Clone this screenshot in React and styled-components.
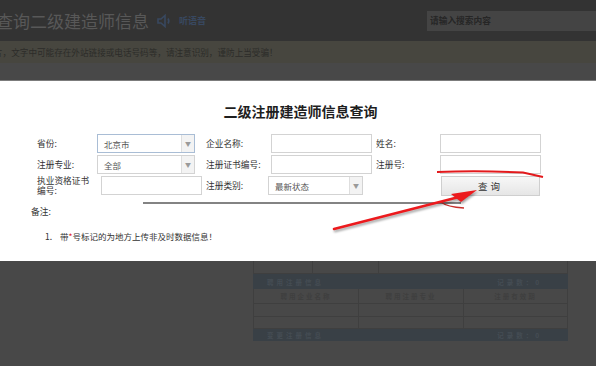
import React from 'react'
import styled, { createGlobalStyle } from 'styled-components'

const GlobalStyle = createGlobalStyle`
  html, body {
    margin: 0;
    padding: 0;
    background: #484848;
    font-family: "Noto Sans CJK SC", "Noto Sans", sans-serif;
  }
`

const Page = styled.div`
  position: relative;
  width: 596px;
  height: 366px;
  overflow: hidden;
  background: #484848;
`

const Header = styled.div`
  height: 41px;
  background: #333333;
  display: flex;
  align-items: center;
`

const SiteTitle = styled.div`
  margin-left: -4px;
  font-size: 17px;
  color: #585858;
  line-height: 1;
`

const Listen = styled.div`
  display: flex;
  align-items: center;
  gap: 7px;
  margin-left: 8px;
  color: #384860;
  font-size: 9px;
  font-weight: bold;
`

const Search = styled.div`
  margin-left: auto;
  width: 166px;
  height: 20px;
  background: #444444;
  display: flex;
  align-items: center;
  padding-left: 3px;
  font-size: 8.7px;
  font-weight: bold;
  color: #262626;
`

const Notice = styled.div`
  height: 22px;
  background: #47463f;
  display: flex;
  align-items: center;
  margin-left: -6px;
  font-size: 8.6px;
  color: #2c2c29;
  white-space: nowrap;
`

const Gap = styled.div`
  height: 17px;
  border-bottom: 1px solid #7c7c7c;
`

const Modal = styled.div`
  height: 180px;
  background: #ffffff;
  padding-top: 20px;
  box-sizing: border-box;
`

const ModalTitle = styled.h2`
  margin: 0;
  text-align: center;
  font-size: 14px;
  line-height: 20px;
  font-weight: bold;
  color: #1e1e1e;
  padding-left: 5px;
`

const Form = styled.div`
  margin-top: 13px;
  padding-left: 37px;
  display: grid;
  grid-template-columns: 60px 109px 62px 108px 64px 102px;
  grid-auto-rows: 19px;
  row-gap: 2px;
  align-items: center;
`

const Label = styled.div`
  font-size: 8.7px;
  line-height: ${p => (p.$tight ? 9.5 : 10)}px;
  color: #333;
`

const Field = styled.div`
  box-sizing: border-box;
  margin-left: ${p => p.$offset || 0}px;
  width: ${p => p.$w}px;
  height: 19px;
  border: 1px solid ${p => (p.$focus ? '#a9bdd5' : '#d3d3d3')};
  background: #fff;
  display: flex;
  align-items: center;
`

const FieldText = styled.span`
  flex: 1;
  padding-left: 6px;
  font-size: 8.5px;
  color: #555;
`

const Arrow = styled.span`
  width: 12px;
  align-self: stretch;
  background: #f3f3f3;
  border-left: 1px solid #dedede;
  display: flex;
  align-items: center;
  justify-content: center;
  font-size: 6px;
  color: #9a9a9a;
`

const Button = styled.div`
  box-sizing: border-box;
  margin-left: 1px;
  width: 99px;
  height: 20px;
  border: 1px solid #cfcfcf;
  background: linear-gradient(#f7f7f7, #e6e6e6);
  display: flex;
  align-items: center;
  justify-content: center;
  font-size: 9.5px;
  letter-spacing: 3px;
  color: #333;
`

const Remark = styled.div`
  margin-top: 10px;
  padding-left: 31px;
  font-size: 8.7px;
  line-height: 14px;
  color: #333;
`

const Item = styled.div`
  margin-top: 10px;
  padding-left: 45px;
  display: flex;
  font-size: 8.5px;
  line-height: 14px;
  color: #333;
`

const Num = styled.span`
  width: 15px;
`

const Star = styled.span`
  color: #e02020;
`

const Below = styled.div`
  padding-left: 253px;
`

const Table = styled.div`
  width: 315px;
`

const Row = styled.div`
  display: grid;
  grid-template-columns: ${p => p.$cols};
  height: ${p => p.$h}px;
  border-bottom: 1px solid #3f3f3f;
`

const Cell = styled.div`
  border-left: 1px solid #3f3f3f;
  &:last-child {
    border-right: 1px solid #3f3f3f;
  }
  display: flex;
  align-items: center;
  justify-content: center;
  font-size: 6.5px;
  letter-spacing: 2px;
  color: #3f3f3f;
  font-weight: bold;
`

const HeadBar = styled.div`
  height: ${p => p.$h}px;
  background: #394046;
  display: flex;
  align-items: center;
  justify-content: space-between;
  padding: 0 26px 0 14px;
  font-size: 6.5px;
  letter-spacing: 3px;
  font-weight: bold;
  color: #454d54;
`

const Overlay = styled.svg`
  position: absolute;
  left: 0;
  top: 0;
  pointer-events: none;
`

function Select({ w, text, focus }) {
  return (
    <Field $w={w} $focus={focus}>
      <FieldText>{text}</FieldText>
      <Arrow>▼</Arrow>
    </Field>
  )
}

export default function App() {
  return (
    <Page>
      <GlobalStyle />
      <Header>
        <SiteTitle>查询二级建造师信息</SiteTitle>
        <Listen>
          <svg width="15" height="14" viewBox="0 0 15 14" fill="none" stroke="#384860" strokeWidth="1.6">
            <path d="M1 5 H4 L8 1.5 V12.5 L4 9 H1 Z" />
            <path d="M11 4.5 Q12.6 7 11 9.5" />
          </svg>
          <span>听语音</span>
        </Listen>
        <Search>请输入搜索内容</Search>
      </Header>
      <Notice>片，文字中可能存在外站链接或电话号码等，请注意识别，谨防上当受骗！</Notice>
      <Gap />
      <Modal>
        <ModalTitle>二级注册建造师信息查询</ModalTitle>
        <Form>
          <Label>省份:</Label>
          <Select w={98} text="北京市" focus />
          <Label>企业名称:</Label>
          <Field $w={101} $offset={3} />
          <Label>姓名:</Label>
          <Field $w={101} />

          <Label>注册专业:</Label>
          <Select w={98} text="全部" />
          <Label>注册证书编号:</Label>
          <Field $w={101} $offset={3} />
          <Label>注册号:</Label>
          <Field $w={101} />

          <Label $tight>执业资格证书<br />编号:</Label>
          <Field $w={101} $offset={4} />
          <Label>注册类别:</Label>
          <Select w={95} text="最新状态" />
          <span />
          <Button>查询</Button>
        </Form>
        <Remark>备注:</Remark>
        <Item>
          <Num>1.</Num>
          <span>带<Star>*</Star>号标记的为地方上传非及时数据信息！</span>
        </Item>
      </Modal>
      <Below>
        <Table>
          <Row $cols="59px 66px 1fr" $h={12}>
            <Cell /><Cell /><Cell />
          </Row>
          <HeadBar $h={15}>
            <span>聘用注册信息</span>
            <span>记录数：0</span>
          </HeadBar>
          <Row $cols="105px 105px 1fr" $h={14}>
            <Cell>聘用企业名称</Cell><Cell>聘用注册专业</Cell><Cell>注册有效期</Cell>
          </Row>
          <Row $cols="105px 105px 1fr" $h={12}>
            <Cell /><Cell /><Cell />
          </Row>
          <Row $cols="105px 105px 1fr" $h={11}>
            <Cell /><Cell /><Cell />
          </Row>
          <HeadBar $h={12}>
            <span>变更注册信息</span>
            <span>记录数：0</span>
          </HeadBar>
        </Table>
      </Below>
      <Overlay width="596" height="366" viewBox="0 0 596 366">
        <path d="M143 203 L461 203" stroke="#5a5a5a" strokeWidth="1.3" />
        <path d="M437 172 Q480 170.5 523 172.5 L543 177" stroke="#e3191c" strokeWidth="2" fill="none" />
        <path d="M441 202 Q447 207 464 208" stroke="#c8302c" strokeWidth="1.4" fill="none" />
        <g filter="drop-shadow(1px 2px 1px rgba(0,0,0,0.35))">
          <path d="M334 229 L459 197" stroke="#ec1a1d" strokeWidth="2.6" strokeLinecap="round" />
          <polygon points="477,190 451,194 461,202" fill="#ec1a1d" />
        </g>
      </Overlay>
    </Page>
  )
}
